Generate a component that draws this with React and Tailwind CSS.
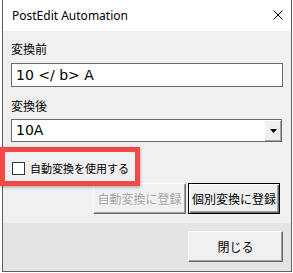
import React from 'react';

const jp = { fontFamily: '"Noto Sans CJK JP", "Noto Sans", sans-serif' };
const latin = { fontFamily: '"DejaVu Sans", sans-serif' };

function Btn({ children, isDefault, disabled, className = '' }) {
  // classic VBA UserForm 3D button
  const bevel = isDefault
    ? 'border border-black shadow-[inset_1px_1px_0_#ffffff,inset_-1px_-1px_0_#696969,inset_-2px_-2px_0_#a0a0a0]'
    : 'border-t border-l border-t-white border-l-white border-r border-b border-r-[#696969] border-b-[#696969] shadow-[inset_-1px_-1px_0_#a0a0a0]';
  return (
    <button
      type="button"
      disabled={disabled}
      className={`h-[31px] bg-[#f0f0f0] text-[12px] leading-none flex items-center justify-center ${bevel} ${
        disabled ? 'text-[#a0a0a0] [text-shadow:1px_1px_0_#ffffff]' : 'text-black'
      } ${className}`}
      style={jp}
    >
      {children}
    </button>
  );
}

export default function App() {
  return (
    <div className="relative w-[293px] h-[273px] bg-white overflow-hidden">
      <div className="ml-[2px] w-[290px] h-[272px] flex flex-col border-l border-r border-b border-[#5f5f5f] border-t-0">
        {/* title bar */}
        <div className="h-[31px] bg-white flex items-center justify-between pl-[9px] pr-[8px]">
          <span className="text-[12px] text-black" style={{ fontFamily: '"Noto Sans", sans-serif' }}>
            PostEdit Automation
          </span>
          <svg width="10" height="10" viewBox="0 0 10 10" className="mb-[1px]">
            <path d="M0.5 0.5 L9.5 9.5 M9.5 0.5 L0.5 9.5" stroke="#000" strokeWidth="1" />
          </svg>
        </div>

        {/* body */}
        <div className="bg-[#f0f0f0] flex flex-col pl-[8px] pt-[10px] pb-[9px]">
          <div className="h-[16px] text-[12px] leading-[16px] text-black" style={jp}>変換前</div>
          <div
            className="mt-[6px] w-[272px] h-[24px] bg-white border border-[#6a6a6a] flex items-center pl-[4px] text-[14px] text-black"
            style={latin}
          >
            10 &lt;/ b&gt; A
          </div>

          <div className="mt-[11px] h-[16px] text-[12px] leading-[16px] text-black" style={jp}>変換後</div>
          <div className="mt-[5px] w-[271px] h-[23px] bg-white border border-[#6a6a6a] flex items-stretch">
            <div className="flex-1 flex items-center pl-[4px] text-[14px] text-black" style={latin}>
              10A
            </div>
            <div className="w-[17px] bg-[#f0f0f0] border-t border-l border-t-white border-l-white flex items-center justify-center shadow-[inset_-1px_-1px_0_#a0a0a0]">
              <svg width="7" height="4" viewBox="0 0 7 4">
                <path d="M0 0 H7 L3.5 4 Z" fill="#000" />
              </svg>
            </div>
          </div>

          <div className="mt-[18px] h-[16px] flex items-center">
            <div className="ml-[1px] w-[13px] h-[13px] bg-white border border-[#333333]" />
            <span className="ml-[5px] text-[11px] leading-[16px] text-black" style={jp}>
              自動変換を使用する
            </span>
          </div>

          <div className="mt-[7px] flex justify-end gap-[2px] pr-[11px]">
            <Btn disabled className="w-[93px]">自動変換に登録</Btn>
            <Btn isDefault className="w-[92px]">個別変換に登録</Btn>
          </div>
        </div>

        {/* footer */}
        <div className="flex-1 bg-[#e4e4e4] flex justify-end items-start pt-[8px] pr-[8px]">
          <Btn className="w-[95px]">閉じる</Btn>
        </div>
      </div>

      {/* red highlight annotation */}
      <div className="absolute left-0 top-[147px] w-[140px] h-[39px] border-[5px] border-[#f14848] shadow-[0_1px_3px_rgba(0,0,0,0.35)]" />
    </div>
  );
}
